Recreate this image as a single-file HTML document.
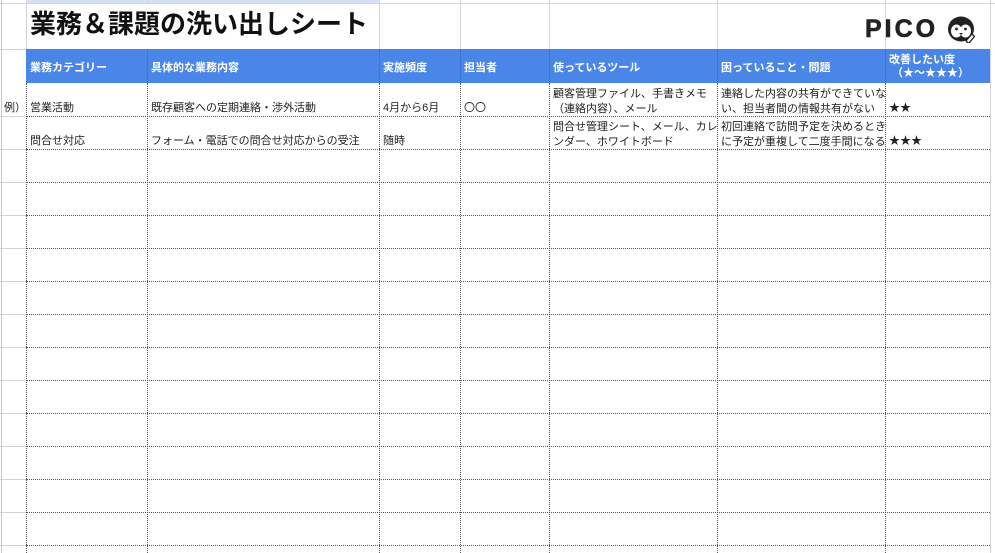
<!DOCTYPE html>
<html><head><meta charset="utf-8"><style>
*{margin:0;padding:0;box-sizing:border-box}
body{width:995px;height:553px;overflow:hidden;background:#fff;position:relative;font-family:"Liberation Sans","Noto Sans CJK JP",sans-serif;font-size:11px;color:#222}
.a{position:absolute}
.h{position:absolute;height:0;border-top:1px dotted #555}
.v{position:absolute;width:0;border-left:1px dotted #555}
.gh{position:absolute;height:1px;background:#d4d4d4}
.gv{position:absolute;width:1px;background:#d4d4d4}
.hd{position:absolute;color:#fff;font-weight:bold;font-size:11px;line-height:13px}
.t{position:absolute;font-size:11px;line-height:15px;white-space:nowrap}
</style></head><body>
<div class="a" style="left:26px;top:0;width:353px;height:3px;background:#d3e2f7"></div>
<div class="gh" style="left:0;top:3px;width:995px"></div>
<div class="gv" style="left:1px;top:0;height:553px;background:#c8c8c8"></div>
<div class="gv" style="left:26px;top:0;height:83px"></div>
<div class="gv" style="left:147px;top:0;height:3px"></div>
<div class="gv" style="left:379px;top:0;height:49px"></div>
<div class="gv" style="left:460px;top:0;height:49px"></div>
<div class="gv" style="left:549px;top:0;height:49px"></div>
<div class="gv" style="left:717px;top:0;height:49px"></div>
<div class="gv" style="left:885px;top:0;height:49px"></div>
<div class="gv" style="left:990px;top:0;height:553px"></div>
<div class="gh" style="left:0;top:49px;width:26px"></div>
<div class="gh" style="left:379px;top:49px;width:611px"></div>
<div class="a" style="left:30px;top:9px;font-size:26px;font-weight:bold;color:#111;line-height:30px">業務＆課題の洗い出しシート</div>
<div class="a" style="left:865px;top:16px;font-size:25px;font-weight:bold;color:#222;letter-spacing:3px;line-height:26px;-webkit-text-stroke:0.6px #222">PICO</div>
<svg class="a" style="left:947px;top:15px" width="28" height="28" viewBox="0 0 28 28">
<ellipse cx="14" cy="14" rx="13" ry="12.5" fill="#222"/>
<ellipse cx="9.5" cy="16" rx="5.5" ry="6.5" fill="#fff"/><ellipse cx="18.5" cy="16" rx="5.5" ry="6.5" fill="#fff"/>
<circle cx="9.5" cy="14" r="1.4" fill="#222"/><circle cx="18.5" cy="14" r="1.4" fill="#222"/>
<path d="M12 18h4l-2 2z" fill="#222"/>
<path d="M19 26l6-7 2.5 2.5-6 7z" fill="#fff" stroke="#222" stroke-width="1.3"/>
</svg>
<div class="a" style="left:26px;top:49px;width:964px;height:34px;background:#4a86e8"></div>
<div class="a" style="left:147px;top:49px;width:1px;height:34px;background:#3f75cf"></div>
<div class="a" style="left:379px;top:49px;width:1px;height:34px;background:#3f75cf"></div>
<div class="a" style="left:460px;top:49px;width:1px;height:34px;background:#3f75cf"></div>
<div class="a" style="left:549px;top:49px;width:1px;height:34px;background:#3f75cf"></div>
<div class="a" style="left:717px;top:49px;width:1px;height:34px;background:#3f75cf"></div>
<div class="a" style="left:885px;top:49px;width:1px;height:34px;background:#3f75cf"></div>
<div class="hd" style="left:30px;top:62px">業務カテゴリー</div>
<div class="hd" style="left:151px;top:62px">具体的な業務内容</div>
<div class="hd" style="left:383px;top:62px">実施頻度</div>
<div class="hd" style="left:464px;top:62px">担当者</div>
<div class="hd" style="left:553px;top:62px">使っているツール</div>
<div class="hd" style="left:721px;top:62px">困っていること・問題</div>
<div class="hd" style="left:889px;top:54px">改善したい度<br>&nbsp;（★〜★★★）</div>
<div class="v" style="left:26px;top:83px;height:470px"></div>
<div class="v" style="left:147px;top:83px;height:470px"></div>
<div class="v" style="left:379px;top:83px;height:470px"></div>
<div class="v" style="left:460px;top:83px;height:470px"></div>
<div class="v" style="left:549px;top:83px;height:470px"></div>
<div class="v" style="left:717px;top:83px;height:470px"></div>
<div class="v" style="left:885px;top:83px;height:470px"></div>
<div class="h" style="left:26px;top:116px;width:964px"></div>
<div class="h" style="left:26px;top:149px;width:964px"></div>
<div class="h" style="left:26px;top:182px;width:964px"></div>
<div class="h" style="left:26px;top:215px;width:964px"></div>
<div class="h" style="left:26px;top:248px;width:964px"></div>
<div class="h" style="left:26px;top:281px;width:964px"></div>
<div class="h" style="left:26px;top:314px;width:964px"></div>
<div class="h" style="left:26px;top:347px;width:964px"></div>
<div class="h" style="left:26px;top:380px;width:964px"></div>
<div class="h" style="left:26px;top:413px;width:964px"></div>
<div class="h" style="left:26px;top:446px;width:964px"></div>
<div class="h" style="left:26px;top:479px;width:964px"></div>
<div class="h" style="left:26px;top:512px;width:964px"></div>
<div class="h" style="left:26px;top:545px;width:964px"></div>
<div class="gh" style="left:0;top:116px;width:26px"></div>
<div class="gh" style="left:0;top:149px;width:26px"></div>
<div class="gh" style="left:0;top:182px;width:26px"></div>
<div class="gh" style="left:0;top:215px;width:26px"></div>
<div class="gh" style="left:0;top:248px;width:26px"></div>
<div class="gh" style="left:0;top:281px;width:26px"></div>
<div class="gh" style="left:0;top:314px;width:26px"></div>
<div class="gh" style="left:0;top:347px;width:26px"></div>
<div class="gh" style="left:0;top:380px;width:26px"></div>
<div class="gh" style="left:0;top:413px;width:26px"></div>
<div class="gh" style="left:0;top:446px;width:26px"></div>
<div class="gh" style="left:0;top:479px;width:26px"></div>
<div class="gh" style="left:0;top:512px;width:26px"></div>
<div class="gh" style="left:0;top:545px;width:26px"></div>
<div class="t" style="left:4px;top:101px">例）</div>
<div class="t" style="left:30px;top:101px">営業活動</div>
<div class="t" style="left:151px;top:101px">既存顧客への定期連絡・渉外活動</div>
<div class="t" style="left:383px;top:101px">4月から6月</div>
<div class="t" style="left:464px;top:101px">〇〇</div>
<div class="t" style="left:553px;top:87px">顧客管理ファイル、手書きメモ<br>（連絡内容）、メール</div>
<div class="t" style="left:721px;top:87px">連絡した内容の共有ができていな<br>い、担当者間の情報共有がない</div>
<div class="t" style="left:889px;top:101px">★★</div>
<div class="t" style="left:30px;top:134px">問合せ対応</div>
<div class="t" style="left:151px;top:134px">フォーム・電話での問合せ対応からの受注</div>
<div class="t" style="left:383px;top:134px">随時</div>
<div class="t" style="left:553px;top:120px">問合せ管理シート、メール、カレ<br>ンダー、ホワイトボード</div>
<div class="t" style="left:721px;top:120px">初回連絡で訪問予定を決めるとき<br>に予定が重複して二度手間になる</div>
<div class="t" style="left:889px;top:134px">★★★</div>
</body></html>
